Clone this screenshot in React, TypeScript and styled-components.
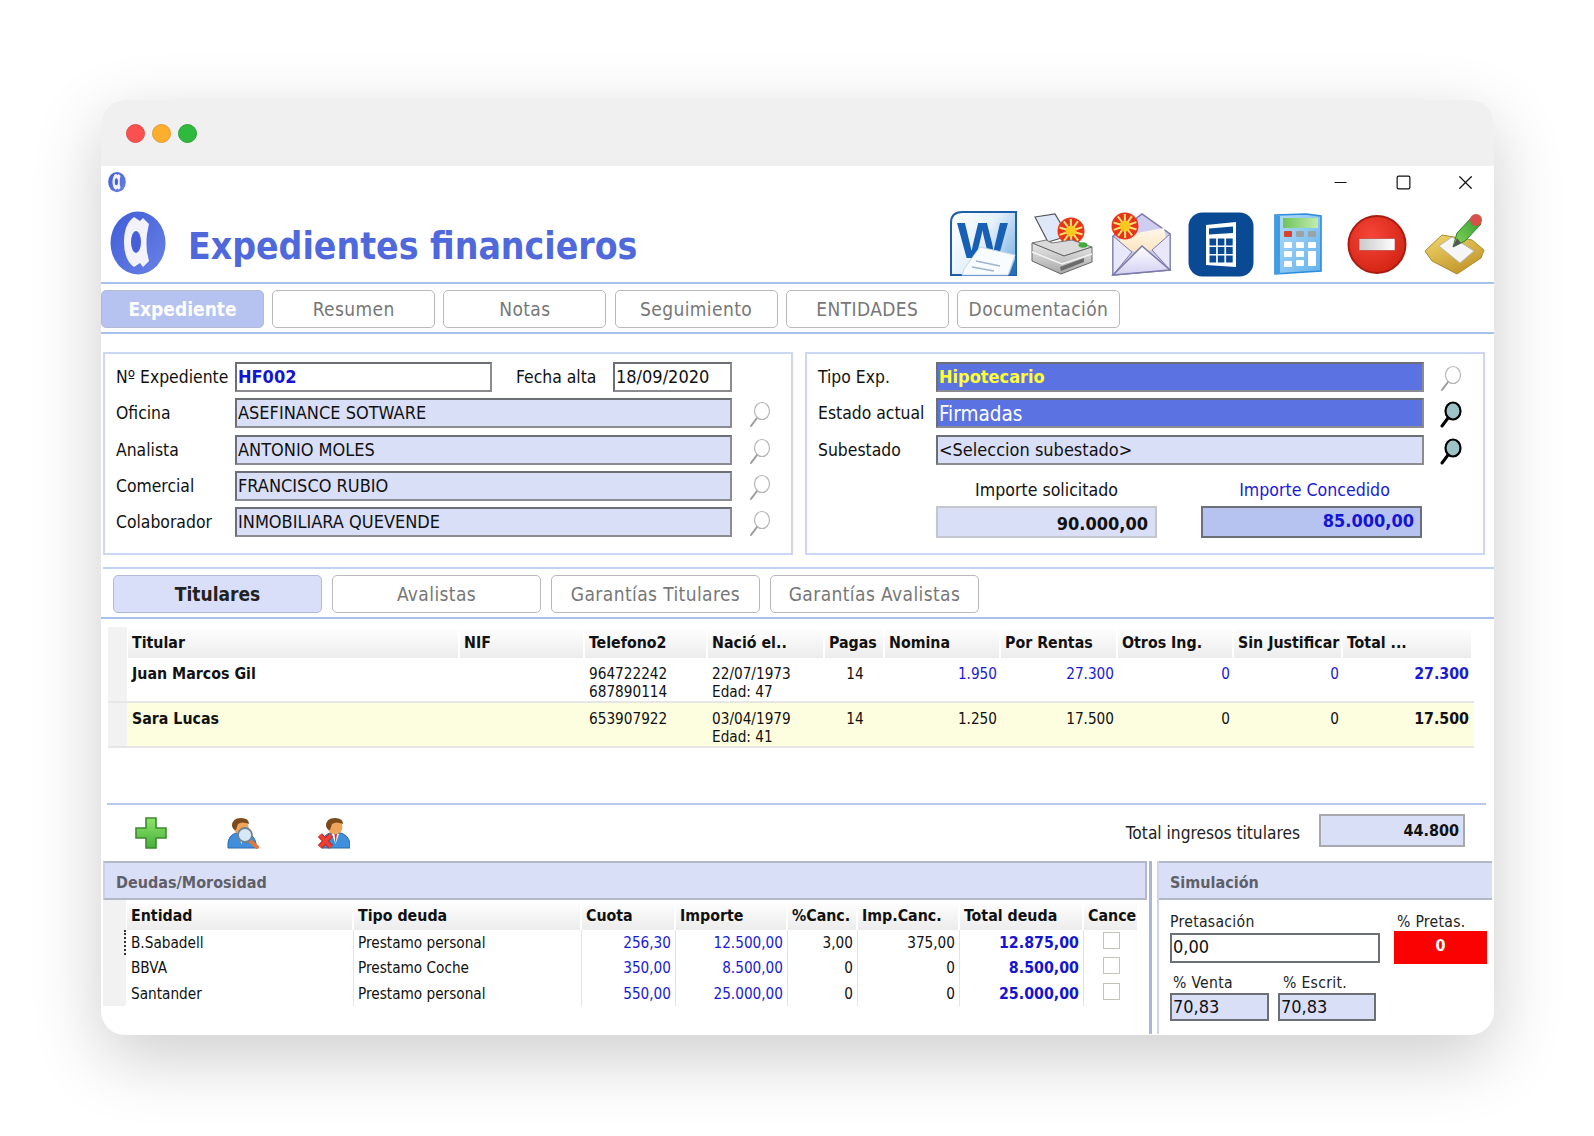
import React from 'react'
import styled, { createGlobalStyle } from 'styled-components'
import { Minus, Square, X } from 'lucide-react'

const FONT = '"DejaVu Sans Condensed", "Noto Sans", "Liberation Sans", sans-serif'

const GlobalStyle = createGlobalStyle`
  html, body { margin: 0; padding: 0; background: #fff; }
  body { font-family: ${FONT}; color: #111; }
  * { box-sizing: border-box; }
`

const Page = styled.div`
  width: 1594px;
  height: 1136px;
  padding: 100px 0 0 101px;
  overflow: hidden;
`
const Window = styled.div`
  width: 1393px;
  height: 935px;
  background: #fff;
  border-radius: 24px;
  overflow: hidden;
  box-shadow: 0 22px 70px rgba(0, 0, 0, 0.2);
`
const TitleBar = styled.div`
  height: 66px;
  background: #f0f0f0;
  display: flex;
  align-items: center;
  gap: 7px;
  padding: 0 0 0 25px;
`
const Dot = styled.span<{ $c: string; $b: string }>`
  width: 19px;
  height: 19px;
  border-radius: 50%;
  background: ${(p) => p.$c};
  border: 1px solid ${(p) => p.$b};
`
const SystemRow = styled.div`
  height: 45px;
  display: flex;
  align-items: flex-start;
  padding: 5px 0 0 7px;
`
const WinButtons = styled.div`
  margin-left: auto;
  margin-right: -3px;
  display: flex;
  color: #111;
`
const WinButton = styled.span`
  width: 62.5px;
  height: 22px;
  display: flex;
  align-items: center;
  justify-content: center;
`
const Header = styled.div`
  height: 73px;
  display: flex;
  align-items: flex-start;
  padding-left: 9px;
  border-bottom: 2px solid #a9c1ef;
`
const AppTitle = styled.h1`
  margin: 11px 0 0 22px;
  font-size: 37px;
  line-height: 50px;
  font-weight: 700;
  color: #4f69dc;
  white-space: nowrap;
`
const Toolbar = styled.div`
  margin-left: auto;
  display: flex;
`
const ToolSlot = styled.span<{ $shift?: number }>`
  width: 78.5px;
  height: 66px;
  padding-left: ${(p) => p.$shift || 0}px;
  display: flex;
  align-items: center;
  justify-content: center;
`
const TabBar = styled.div<{ $pad: number; $gap: number }>`
  display: flex;
  gap: ${(p) => p.$gap}px;
  padding: 6px 0 4px ${(p) => p.$pad}px;
  height: 50px;
  border-bottom: 2px solid #a9c1ef;
`
const Tab = styled.div<{ $active?: boolean; $w: number; $dark?: boolean }>`
  width: ${(p) => p.$w}px;
  height: 38px;
  border: 1px solid ${(p) => (p.$active ? '#b3bbd6' : '#b9b9b9')};
  border-radius: 5px;
  display: flex;
  align-items: center;
  justify-content: center;
  font-size: 19px;
  background: ${(p) => (p.$active ? (p.$dark ? '#d9dff8' : '#b6c3f1') : '#fff')};
  color: ${(p) => (p.$active ? (p.$dark ? '#222' : '#fff') : '#777')};
  font-weight: ${(p) => (p.$active ? 700 : 400)};
  letter-spacing: ${(p) => (p.$active ? 0 : 0.4)}px;
`
const PanelRow = styled.div`
  display: flex;
  gap: 12px;
  padding: 18px 0 12px 2px;
`
const Panel = styled.div<{ $w: number; $label: number; $field: number; $icon: number }>`
  width: ${(p) => p.$w}px;
  height: 203px;
  border: 2px solid #ccd6f5;
  padding: 8px 0 0 11px;
  display: grid;
  grid-template-columns: ${(p) => `${p.$label}px ${p.$field}px ${p.$icon}px`};
  grid-auto-rows: 30px;
  row-gap: 6.3px;
  align-items: center;
`
const Label = styled.div`
  font-size: 17.4px;
  color: #111;
  white-space: nowrap;
`
const Field = styled.div<{ $bg?: string; $color?: string; $bold?: boolean; $size?: number; $w?: number }>`
  height: 30px;
  ${(p) => (p.$w ? `width: ${p.$w}px; flex: none;` : '')}
  border: 2px solid #6d6f76;
  border-right-color: #8a8c92;
  border-bottom-color: #8a8c92;
  background: ${(p) => p.$bg || '#dadff8'};
  color: ${(p) => p.$color || '#111'};
  font-weight: ${(p) => (p.$bold ? 700 : 400)};
  font-size: ${(p) => p.$size || 18}px;
  line-height: ${(p) => (p.$size ? 28 : 25)}px;
  padding-left: 1px;
  white-space: nowrap;
  overflow: hidden;
`
const DoubleField = styled.div`
  display: flex;
  align-items: center;
`
const InlineLabel = styled(Label)`
  flex: 1;
  padding-left: 24px;
`
const IconCell = styled.div`
  display: flex;
  align-items: center;
  justify-content: center;
  padding-top: 3px;
`
const Amounts = styled.div`
  grid-column: 2 / 4;
  grid-row: span 2;
  align-self: start;
  display: flex;
  gap: 44px;
  padding-top: 7px;
`
const AmountCol = styled.div`
  width: 221px;
  display: flex;
  flex-direction: column;
  gap: 4px;
`
const AmountLabel = styled.div<{ $blue?: boolean }>`
  font-size: 17.6px;
  line-height: 24px;
  text-align: center;
  margin-left: ${(p) => (p.$blue ? 6 : 0)}px;
  color: ${(p) => (p.$blue ? '#1a1ad6' : '#111')};
`
const AmountBox = styled.div<{ $strong?: boolean }>`
  height: 32px;
  text-align: right;
  font-size: 18px;
  font-weight: 700;
  line-height: ${(p) => (p.$strong ? 25 : 31)}px;
  padding-right: ${(p) => (p.$strong ? 6 : 7)}px;
  background: ${(p) => (p.$strong ? '#b6c3f1' : '#dadff8')};
  color: ${(p) => (p.$strong ? '#1414d2' : '#111')};
  border: 2px solid ${(p) => (p.$strong ? '#6d6f76' : '#c4c6cf')};
`
const FullLine = styled.div`
  height: 2px;
  margin-left: 2px;
  background: #c3d2f2;
`
const GridWrap = styled.div`
  margin: 8px 20px 0 7px;
  height: 119px;
`
const cols1 = '20px 332px 125px 123px 117px 60px 116px 117px 116px 109px 130px'
const cols2 = '24px 227px 228px 94px 112px 70px 102px 124px 55px'

const GridRow = styled.div<{ $cols: string; $h: number; $bg?: string; $line?: boolean }>`
  display: grid;
  grid-template-columns: ${(p) => p.$cols};
  height: ${(p) => p.$h}px;
  background: ${(p) => p.$bg || 'transparent'};
  ${(p) => (p.$line ? 'border-bottom: 2px solid #e6e6e6;' : '')}
`
const Indicator = styled.div<{ $mark?: boolean }>`
  background: #f2f2f2;
  margin-right: 1px;
  ${(p) => (p.$mark ? 'border-right: 2px dotted #333;' : '')}
`
const HeadCell = styled.div`
  background: linear-gradient(#fff, #ececec);
  border-right: 2px solid #fff;
  font-weight: 700;
  font-size: 15.8px;
  line-height: 31px;
  padding-left: 4px;
  white-space: nowrap;
  overflow: hidden;
  color: #111;
`
const Cell = styled.div<{ $align?: string; $color?: string; $bold?: boolean; $top: number; $sep?: boolean }>`
  font-size: ${(p) => (p.$bold ? 15.8 : 15.2)}px;
  line-height: 18px;
  padding: ${(p) => p.$top}px 4px 0 4px;
  text-align: ${(p) => p.$align || 'left'};
  color: ${(p) => p.$color || '#111'};
  font-weight: ${(p) => (p.$bold ? 700 : 400)};
  white-space: pre-line;
  ${(p) => (p.$sep ? 'border-right: 1px solid #e4e4e4;' : '')}
`
const SeparatorLine = styled.div`
  height: 2px;
  margin: 57px 8px 0 6px;
  background: #b7c9ef;
`
const ActionBar = styled.div`
  height: 56px;
  display: flex;
  align-items: center;
  padding: 0 29px 0 34px;
`
const ActionIcon = styled.span`
  width: 91.5px;
  display: flex;
  align-items: center;
`
const TotalLabel = styled.div`
  margin-left: auto;
  font-size: 17.2px;
  color: #222;
  padding-right: 19px;
`
const TotalBox = styled.div`
  width: 146px;
  height: 33px;
  margin-top: -6px;
  background: #dadff8;
  border: 2px solid #a8a9ae;
  text-align: right;
  font-size: 16px;
  font-weight: 700;
  line-height: 30px;
  padding-right: 4px;
`
const Bottom = styled.div`
  display: flex;
  padding-left: 2px;
  height: 173px;
`
const DebtPane = styled.div`
  width: 1044px;
`
const Splitter = styled.div`
  width: 10px;
  margin-left: 2px;
  background: #fff;
  border-left: 3px solid #a9b6d8;
  border-right: 2px solid #ccd4f2;
`
const SimPane = styled.div`
  width: 333px;
`
const BarTitle = styled.div<{ $noside?: boolean }>`
  height: 39px;
  background: #dadff8;
  border: 2px solid #b4b8c6;
  ${(p) => (p.$noside ? 'border-left: 0; border-right: 0;' : 'border-left-color: #ccd2ee;')}
  padding-left: 11px;
  font-size: 16px;
  font-weight: 700;
  line-height: 39px;
  color: #5f6068;
`
const CheckCell = styled.div`
  display: flex;
  justify-content: flex-end;
  padding: 2px 19px 0 0;
`
const Check = styled.span`
  width: 17px;
  height: 17px;
  background: #fff;
  border: 1px solid #c4c4ba;
`
const SimBody = styled.div`
  padding: 10px 0 0 11px;
  display: grid;
  grid-template-columns: 99px 9px 98px 4px 14px 93px;
  grid-template-rows: 23px 30px 8px 22px 28px;
`
const SimLabel = styled.div<{ $col: string; $row: number; $pad?: number }>`
  grid-column: ${(p) => p.$col};
  grid-row: ${(p) => p.$row};
  padding: 2px 0 0 ${(p) => p.$pad || 0}px;
  font-size: 15.6px;
  line-height: 20px;
  color: #222;
  white-space: nowrap;
  letter-spacing: 0.3px;
`
const SimField = styled.div<{ $col: string; $row: string; $lav?: boolean }>`
  grid-column: ${(p) => p.$col};
  grid-row: ${(p) => p.$row};
  background: ${(p) => (p.$lav ? '#dadff8' : '#fff')};
  border: 2px solid #6d6f76;
  font-size: 18px;
  line-height: 24px;
  padding-left: 1px;
`
const RedBox = styled.div`
  grid-column: 6;
  grid-row: 2;
  background: #fb0202;
  color: #fff;
  margin-top: -2px;
  height: 33px;
  font-weight: 700;
  font-size: 16px;
  text-align: center;
  line-height: 30px;
`

const SearchIcon = ({ dark }: { dark?: boolean }) => (
  <svg width="24" height="27" viewBox="0 0 24 27">
    <line x1="9" y1="17" x2="3" y2="25" stroke={dark ? '#000' : '#9a9a9a'} strokeWidth={dark ? 3 : 2} strokeLinecap="round" />
    <ellipse cx="14" cy="10" rx="7.5" ry="8.5" fill={dark ? '#9cc4c6' : '#fff'} stroke={dark ? '#000' : '#b5b5b5'} strokeWidth={dark ? 2.2 : 1.2} />
  </svg>
)

const Logo = ({ w, h, id }: { w: number; h: number; id: string }) => (
  <svg width={w} height={h} viewBox="0 0 56 64">
    <defs>
      <linearGradient id={id} x1="0" x2="1" y1="0" y2="1">
        <stop offset="0" stopColor="#3f5cd8" />
        <stop offset="1" stopColor="#6a82e6" />
      </linearGradient>
    </defs>
    <ellipse cx="28" cy="32" rx="27.5" ry="31.5" fill={`url(#${id})`} />
    <path d="M24 6 L30 10 L33 7 L39 13 L37 23 Q36 31 37 41 L39 50 L33 56 L30 52 L24 56 Q14 49 14 31 Q14 13 24 6 Z" fill="#f3f2fa" />
    <ellipse cx="26" cy="31" rx="5" ry="11" fill="#4660da" />
  </svg>
)

const WordIcon = () => (
  <svg width="67" height="66" viewBox="0 0 67 66">
    <defs>
      <linearGradient id="wd" x1="0" y1="0" x2="1" y2="0.6">
        <stop offset="0" stopColor="#fff" />
        <stop offset="0.55" stopColor="#e6f1fb" />
        <stop offset="1" stopColor="#8dbde6" />
      </linearGradient>
    </defs>
    <path d="M12 1 H66 V64 H1 V12 Q1 1 12 1 Z" fill="url(#wd)" stroke="#1f5ea8" strokeWidth="2" />
    <text x="7" y="47" fontFamily="Liberation Sans, sans-serif" fontWeight="700" fontSize="50" fill="#1760b6" textLength="51" lengthAdjust="spacingAndGlyphs">W</text>
    <path d="M14 58 L30 36 L65 44 L58 64 H12 Z" fill="#f9fcff" stroke="#c5d8ea" />
    <path d="M26 50 L50 55 M22 56 L44 60" stroke="#9fb4cc" strokeWidth="1.5" />
    <path d="M59 64 L66 46 V64 Z" fill="#2a6db8" />
  </svg>
)

const Burst = ({ cx, cy }: { cx: number; cy: number }) => {
  const rays = Array.from({ length: 10 }, (_, i) => (i * Math.PI) / 5 + 0.3)
  return (
    <g>
      <circle cx={cx} cy={cy} r="13.5" fill="#ea3418" />
      {rays.map((a) => (
        <line key={a} x1={cx} y1={cy} x2={cx + Math.cos(a) * 12} y2={cy + Math.sin(a) * 12} stroke="#ffe27a" strokeWidth="2" />
      ))}
      <circle cx={cx} cy={cy} r="5.5" fill="#ffc81f" />
    </g>
  )
}

const PrinterIcon = () => (
  <svg width="64" height="62" viewBox="0 0 64 62">
    <defs>
      <linearGradient id="pr" x1="0" x2="0" y1="0" y2="1">
        <stop offset="0" stopColor="#e8e8e8" />
        <stop offset="1" stopColor="#a8a8a8" />
      </linearGradient>
    </defs>
    <path d="M5 4 L25 1 L38 23 L18 29 Z" fill="#dfe8f8" stroke="#555" strokeWidth="1.2" />
    <Burst cx={41} cy={18} />
    <path d="M2 30 L16 27 L22 30 L42 27 L62 34 L34 43 Z" fill="#dadada" stroke="#777" />
    <path d="M2 30 L34 43 L62 34 V49 L31 61 L2 48 Z" fill="url(#pr)" stroke="#666" />
    <path d="M2 39 L32 51 L62 41" fill="none" stroke="#f4f4f4" strokeWidth="1.5" />
    <path d="M30 54 L54 45 V49 L31 58 Z" fill="#6b6b6b" />
    <ellipse cx="53" cy="32" rx="4.5" ry="2.8" fill="#43ab3e" />
  </svg>
)

const MailIcon = () => (
  <svg width="62" height="64" viewBox="0 0 62 64">
    <defs>
      <linearGradient id="ml" x1="0" x2="0" y1="0" y2="1">
        <stop offset="0" stopColor="#ffffff" />
        <stop offset="1" stopColor="#d3d0f3" />
      </linearGradient>
      <linearGradient id="cr" x1="0" x2="0" y1="0" y2="1">
        <stop offset="0" stopColor="#fff8ea" />
        <stop offset="1" stopColor="#fbe3bd" />
      </linearGradient>
    </defs>
    <path d="M3 24 L32 2 L60 22 V58 L3 63 Z" fill="#cfcdf2" stroke="#7c7aa8" strokeWidth="1.5" />
    <path d="M11 24 L54 16 L57 32 L31 42 L9 34 Z" fill="url(#cr)" />
    <path d="M3 24 L22 40 L3 63 Z M60 22 L42 38 L60 58 Z" fill="#e9e7fa" stroke="#7c7aa8" />
    <path d="M3 63 L32 34 L60 58 Z" fill="url(#ml)" stroke="#7c7aa8" strokeWidth="1.5" />
    <Burst cx={15} cy={14} />
  </svg>
)

const DarkCalcIcon = () => {
  const keys = [0, 1, 2].flatMap((r) => [0, 1, 2].map((c) => ({ r, c })))
  return (
    <svg width="66" height="65" viewBox="0 0 66 65">
      <rect x="0.5" y="0.5" width="65" height="64" rx="14" fill="#0a4a94" />
      <path d="M18 13 L48 10 V55 L18 53 Z" fill="#fff" />
      <path d="M21 16.5 L45 14.5 V21 L21 22.5 Z" fill="#0a4a94" />
      {keys.map(({ r, c }) => (
        <rect key={`${r}${c}`} x={21.5 + c * 8.3} y={26.5 + r * 8.5} width="6.6" height="7" fill="#0a4a94" />
      ))}
    </svg>
  )
}

const LightCalcIcon = () => {
  const small = [
    [10, 18, '#d8422c'], [22, 18, '#9aa4a8'], [34, 18, '#9aa4a8'],
    [10, 29, '#fff'], [22, 29, '#fff'], [34, 29, '#fff'],
    [10, 38, '#fff'], [22, 38, '#fff'],
    [10, 48, '#fff'], [22, 47, '#fff'],
  ] as const
  return (
    <svg width="48" height="62" viewBox="0 0 48 62">
      <defs>
        <linearGradient id="lc" x1="0" x2="1" y1="0" y2="1">
          <stop offset="0" stopColor="#b4dcf8" />
          <stop offset="1" stopColor="#62b2ec" />
        </linearGradient>
        <linearGradient id="lcs" x1="0" x2="1">
          <stop offset="0" stopColor="#6fc45c" />
          <stop offset="1" stopColor="#c2ecb0" />
        </linearGradient>
      </defs>
      <path d="M1 2 L32 1 L47 3 V58 L1 61 Z" fill="url(#lc)" stroke="#2c8bdc" strokeWidth="1.6" />
      <path d="M1 2 L6 3 V61 H1 Z" fill="#3f9de6" />
      <rect x="9" y="5" width="35" height="10" fill="url(#lcs)" />
      {small.map(([x, y, c]) => (
        <rect key={`${x}-${y}`} x={x} y={y} width="8" height="6" rx="1" fill={c} />
      ))}
      <rect x="34" y="38" width="8" height="15" rx="1" fill="#fff" />
    </svg>
  )
}

const StopIcon = () => (
  <svg width="60" height="61" viewBox="0 0 60 61">
    <defs>
      <radialGradient id="st" cx="0.4" cy="0.35" r="0.75">
        <stop offset="0" stopColor="#f5463a" />
        <stop offset="1" stopColor="#d0200f" />
      </radialGradient>
      <linearGradient id="br" x1="0" x2="1">
        <stop offset="0" stopColor="#c9c9c9" />
        <stop offset="1" stopColor="#fff" />
      </linearGradient>
    </defs>
    <circle cx="30" cy="30.5" r="28.5" fill="url(#st)" stroke="#a81c10" strokeWidth="2" />
    <rect x="12" y="24.5" width="36" height="12" fill="url(#br)" stroke="#b33" strokeWidth="0.6" />
  </svg>
)

const ApproveIcon = () => (
  <svg width="61" height="62" viewBox="0 0 61 62">
    <defs>
      <linearGradient id="gd" x1="0" x2="0.6" y1="0" y2="1">
        <stop offset="0" stopColor="#f2d86e" />
        <stop offset="1" stopColor="#c2962a" />
      </linearGradient>
      <linearGradient id="pn" x1="0" x2="1" y1="1" y2="0">
        <stop offset="0" stopColor="#8bd95a" />
        <stop offset="1" stopColor="#2e9a30" />
      </linearGradient>
    </defs>
    <path d="M1 38 L18 22 L48 27 L60 37 L57 45 L33 61 L8 48 Z" fill="url(#gd)" stroke="#a98a2c" />
    <path d="M15 33 L28 24 L50 38 L36 50 Z" fill="#f6f6f6" stroke="#b9b9b9" />
    <path d="M29 34 L33 20 L49 3 L57 11 L41 28 Z" fill="url(#pn)" stroke="#2c8030" />
    <path d="M29 34 L33 25 L37 30 Z" fill="#555" />
    <circle cx="52" cy="7" r="6" fill="#d8504a" />
  </svg>
)

const PlusIcon = () => (
  <svg width="32" height="32" viewBox="0 0 32 32">
    <defs>
      <linearGradient id="pl" x1="0" x2="0" y1="0" y2="1">
        <stop offset="0" stopColor="#8fe36a" />
        <stop offset="1" stopColor="#45b03c" />
      </linearGradient>
    </defs>
    <path d="M11 1 H21 V11 H31 V21 H21 V31 H11 V21 H1 V11 H11 Z" fill="url(#pl)" stroke="#3c8a2e" strokeWidth="1.6" />
  </svg>
)

const PersonBase = () => (
  <g>
    <path d="M1 31 V26 Q2 18 9 16 H20 Q27 18 29 26 V31 Z" fill="#3f8fdc" stroke="#2c6aa8" />
    <circle cx="14" cy="10" r="7.5" fill="#eea45a" />
    <path d="M5 9 Q5 1 14 1 Q22 1 22 7 Q15 4 11 7 L9 13 Q6 13 5 9 Z" fill="#7a4a1c" />
    <path d="M11 17 L14.5 27 L18 17 Z" fill="#fff" />
  </g>
)

const PersonSearchIcon = () => (
  <svg width="32" height="32" viewBox="0 0 32 32">
    <PersonBase />
    <path d="M22 23 L30 30" stroke="#e0783a" strokeWidth="4" strokeLinecap="round" />
    <circle cx="18" cy="18" r="7" fill="#d6e8f6" stroke="#74828f" strokeWidth="1.8" />
  </svg>
)

const PersonRemoveIcon = () => (
  <svg width="32" height="32" viewBox="0 0 32 32">
    <g transform="translate(3 0)">
      <PersonBase />
      <path d="M13.5 17 L14.5 27 L16 17 Z" fill="#d83a2a" />
    </g>
    <path d="M2 18 L13 30 M13 18 L2 30" stroke="#b9261c" strokeWidth="5.5" />
    <path d="M2 18 L13 30 M13 18 L2 30" stroke="#ee4034" strokeWidth="3.5" />
  </svg>
)

const mainTabs = ['Expediente', 'Resumen', 'Notas', 'Seguimiento', 'ENTIDADES', 'Documentación']
const subTabs = ['Titulares', 'Avalistas', 'Garantías Titulares', 'Garantías Avalistas']
const headers1 = ['Titular', 'NIF', 'Telefono2', 'Nació el..', 'Pagas', 'Nomina', 'Por Rentas', 'Otros Ing.', 'Sin Justificar', 'Total ...']
const headers2 = ['Entidad', 'Tipo deuda', 'Cuota', 'Importe', '%Canc.', 'Imp.Canc.', 'Total deuda', 'Cance']

const holders = [
  { name: 'Juan Marcos Gil', tel: '964722242\n687890114', born: '22/07/1973\nEdad: 47', nom: '1.950', rent: '27.300', total: '27.300', color: '#1a1ad6', bg: '#fff' },
  { name: 'Sara Lucas', tel: '653907922', born: '03/04/1979\nEdad: 41', nom: '1.250', rent: '17.500', total: '17.500', color: '#111', bg: '#fdfde0' },
]
const debts = [
  { ent: 'B.Sabadell', tipo: 'Prestamo personal', cuota: '256,30', imp: '12.500,00', pct: '3,00', canc: '375,00', total: '12.875,00' },
  { ent: 'BBVA', tipo: 'Prestamo Coche', cuota: '350,00', imp: '8.500,00', pct: '0', canc: '0', total: '8.500,00' },
  { ent: 'Santander', tipo: 'Prestamo personal', cuota: '550,00', imp: '25.000,00', pct: '0', canc: '0', total: '25.000,00' },
]

export default function App() {
  return (
    <Page>
      <GlobalStyle />
      <Window>
        <TitleBar>
          <Dot $c="#fb5050" $b="#e24a44" />
          <Dot $c="#fdae2c" $b="#e29a2a" />
          <Dot $c="#2eba3c" $b="#2ba238" />
        </TitleBar>
        <SystemRow>
          <Logo w={18} h={22} id="logoSmall" />
          <WinButtons>
            <WinButton><Minus size={19} strokeWidth={1.5} /></WinButton>
            <WinButton><Square size={17} strokeWidth={1.7} /></WinButton>
            <WinButton><X size={23} strokeWidth={1.3} /></WinButton>
          </WinButtons>
        </SystemRow>
        <Header>
          <Logo w={56} h={64} id="logoBig" />
          <AppTitle>Expedientes financieros</AppTitle>
          <Toolbar>
            <ToolSlot><WordIcon /></ToolSlot>
            <ToolSlot><PrinterIcon /></ToolSlot>
            <ToolSlot><MailIcon /></ToolSlot>
            <ToolSlot $shift={4}><DarkCalcIcon /></ToolSlot>
            <ToolSlot><LightCalcIcon /></ToolSlot>
            <ToolSlot $shift={2}><StopIcon /></ToolSlot>
            <ToolSlot><ApproveIcon /></ToolSlot>
          </Toolbar>
        </Header>
        <TabBar $pad={0} $gap={8.2}>
          {mainTabs.map((t, i) => (
            <Tab key={t} $w={163} $active={i === 0}>{t}</Tab>
          ))}
        </TabBar>

        <PanelRow>
          <Panel $w={690} $label={119} $field={497} $icon={56}>
            <Label>Nº Expediente</Label>
            <DoubleField>
              <Field $bg="#fff" $color="#1414d2" $bold $w={257}>HF002</Field>
              <InlineLabel>Fecha alta</InlineLabel>
              <Field $bg="#fff" $w={119}>18/09/2020</Field>
            </DoubleField>
            <span />
            {[
              ['Oficina', 'ASEFINANCE SOTWARE'],
              ['Analista', 'ANTONIO MOLES'],
              ['Comercial', 'FRANCISCO RUBIO'],
              ['Colaborador', 'INMOBILIARA QUEVENDE'],
            ].map(([l, v]) => (
              <React.Fragment key={l}>
                <Label>{l}</Label>
                <Field>{v}</Field>
                <IconCell><SearchIcon /></IconCell>
              </React.Fragment>
            ))}
          </Panel>
          <Panel $w={680} $label={118} $field={488} $icon={54}>
            <Label>Tipo Exp.</Label>
            <Field $bg="#5b73e2" $color="#ffff33" $bold>Hipotecario</Field>
            <IconCell><SearchIcon /></IconCell>
            <Label>Estado actual</Label>
            <Field $bg="#5b73e2" $color="#fff" $size={20.5}>Firmadas</Field>
            <IconCell><SearchIcon dark /></IconCell>
            <Label>Subestado</Label>
            <Field>{'<Seleccion subestado>'}</Field>
            <IconCell><SearchIcon dark /></IconCell>
            <span />
            <Amounts>
              <AmountCol>
                <AmountLabel>Importe solicitado</AmountLabel>
                <AmountBox>90.000,00</AmountBox>
              </AmountCol>
              <AmountCol>
                <AmountLabel $blue>Importe Concedido</AmountLabel>
                <AmountBox $strong>85.000,00</AmountBox>
              </AmountCol>
            </Amounts>
          </Panel>
        </PanelRow>

        <FullLine />
        <TabBar $pad={12} $gap={10}>
          {subTabs.map((t, i) => (
            <Tab key={t} $w={209} $active={i === 0} $dark>{t}</Tab>
          ))}
        </TabBar>

        <GridWrap>
          <GridRow $cols={cols1} $h={31}>
            <Indicator />
            {headers1.map((h) => (
              <HeadCell key={h}>{h}</HeadCell>
            ))}
          </GridRow>
          {holders.map((r) => (
            <GridRow key={r.name} $cols={cols1} $h={45} $bg={r.bg} $line>
              <Indicator />
              <Cell $top={7} $bold>{r.name}</Cell>
              <Cell $top={7} />
              <Cell $top={7}>{r.tel}</Cell>
              <Cell $top={7}>{r.born}</Cell>
              <Cell $top={7} $align="center">14</Cell>
              <Cell $top={7} $align="right" $color={r.color}>{r.nom}</Cell>
              <Cell $top={7} $align="right" $color={r.color}>{r.rent}</Cell>
              <Cell $top={7} $align="right" $color={r.color}>0</Cell>
              <Cell $top={7} $align="right" $color={r.color}>0</Cell>
              <Cell $top={7} $align="right" $color={r.color} $bold>{r.total}</Cell>
            </GridRow>
          ))}
        </GridWrap>

        <SeparatorLine />
        <ActionBar>
          <ActionIcon><PlusIcon /></ActionIcon>
          <ActionIcon><PersonSearchIcon /></ActionIcon>
          <ActionIcon><PersonRemoveIcon /></ActionIcon>
          <TotalLabel>Total ingresos titulares</TotalLabel>
          <TotalBox>44.800</TotalBox>
        </ActionBar>

        <Bottom>
          <DebtPane>
            <BarTitle>Deudas/Morosidad</BarTitle>
            <GridRow $cols={cols2} $h={30}>
              <Indicator />
              {headers2.map((h) => (
                <HeadCell key={h}>{h}</HeadCell>
              ))}
            </GridRow>
            {debts.map((d, i) => (
              <GridRow key={d.ent} $cols={cols2} $h={25.4}>
                <Indicator $mark={i === 0} />
                <Cell $top={4} $sep>{d.ent}</Cell>
                <Cell $top={4} $sep>{d.tipo}</Cell>
                <Cell $top={4} $sep $align="right" $color="#1a1ad6">{d.cuota}</Cell>
                <Cell $top={4} $sep $align="right" $color="#1a1ad6">{d.imp}</Cell>
                <Cell $top={4} $sep $align="right">{d.pct}</Cell>
                <Cell $top={4} $sep $align="right">{d.canc}</Cell>
                <Cell $top={4} $sep $align="right" $color="#1414d2" $bold>{d.total}</Cell>
                <CheckCell><Check /></CheckCell>
              </GridRow>
            ))}
          </DebtPane>
          <Splitter />
          <SimPane>
            <BarTitle $noside>Simulación</BarTitle>
            <SimBody>
              <SimLabel $col="1 / 5" $row={1}>Pretasación</SimLabel>
              <SimLabel $col="6" $row={1} $pad={3}>% Pretas.</SimLabel>
              <SimField $col="1 / 5" $row="2">0,00</SimField>
              <RedBox>0</RedBox>
              <SimLabel $col="1" $row={4} $pad={3}>% Venta</SimLabel>
              <SimLabel $col="3" $row={4} $pad={5}>% Escrit.</SimLabel>
              <SimField $col="1" $row="5" $lav>70,83</SimField>
              <SimField $col="3" $row="5" $lav>70,83</SimField>
            </SimBody>
          </SimPane>
        </Bottom>
      </Window>
    </Page>
  )
}
